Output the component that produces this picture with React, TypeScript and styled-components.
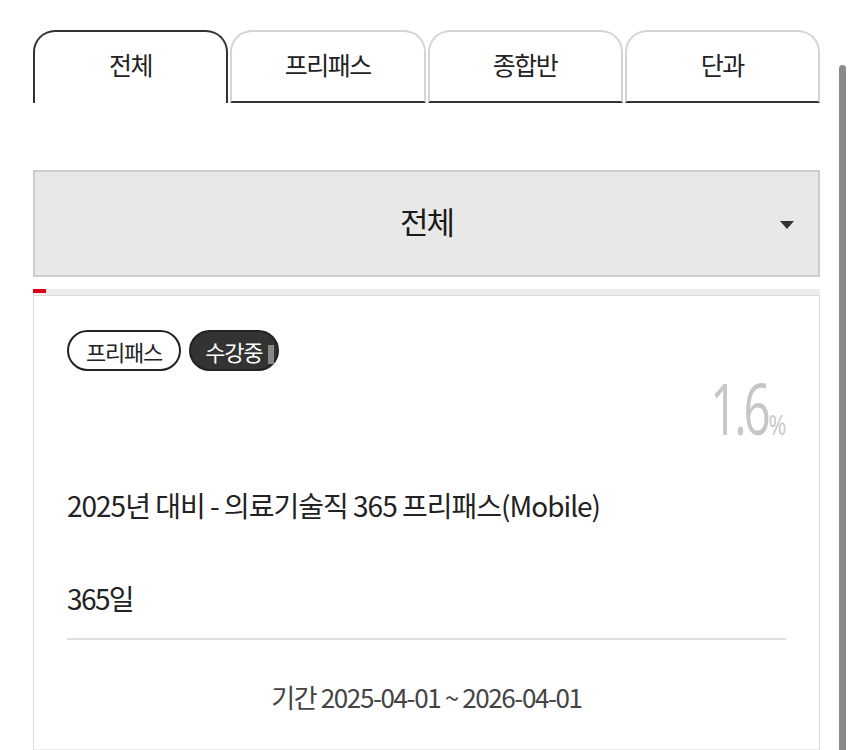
import { FC } from 'react';
import styled, { createGlobalStyle } from 'styled-components';

const GlobalStyle = createGlobalStyle`
    html, body {
        margin: 0;
        padding: 0;
        background: #fff;
        font-family: 'Noto Sans CJK KR', 'Noto Sans', sans-serif;
        color: #222;
    }
    * {
        box-sizing: border-box;
    }
`;

const Page = styled.div`
    position: relative;
    width: 854px;
    height: 750px;
    overflow: hidden;
    padding: 30px 34px 0 33px;
`;

const ScrollThumb = styled.div`
    position: absolute;
    right: 8px;
    top: 65px;
    width: 7px;
    height: 700px;
    border-radius: 4px 4px 0 0;
    background: #8a8a8a;
`;

const TabList = styled.div`
    display: grid;
    grid-template-columns: repeat(4, 1fr);
    gap: 2px;
    height: 73px;
`;

const Tab = styled.button<{ $active?: boolean }>`
    font-family: inherit;
    font-size: 25px;
    color: #222;
    background: #fff;
    border: 2px solid ${({ $active }) => ($active ? '#333' : '#d4d4d4')};
    border-bottom: ${({ $active }) => ($active ? 'none' : '2px solid #333')};
    border-radius: 22px 22px 0 0;
    padding: 0 0 ${({ $active }) => ($active ? '8px' : '6px')};
    letter-spacing: -1.5px;
    cursor: pointer;
`;

const SelectBox = styled.div`
    position: relative;
    margin-top: 67px;
    height: 107px;
    background: #e8e8e8;
    border: 2px solid #cdcdcd;
    display: flex;
    align-items: center;
    justify-content: center;
    padding-bottom: 6px;
    font-size: 31px;
    font-weight: 400;
    letter-spacing: -2px;
    color: #1a1a1a;
`;

const Caret = styled.span`
    position: absolute;
    right: 24px;
    top: 50%;
    margin-top: -3px;
    width: 0;
    height: 0;
    border-left: 7px solid transparent;
    border-right: 7px solid transparent;
    border-top: 8px solid #333;
`;

const Progress = styled.div`
    margin-top: 12px;
    height: 6px;
    background: #ececec;
`;

const ProgressFill = styled.div`
    height: 4px;
    background: #e0001b;
`;

const Card = styled.div`
    border: 1px solid #dcdcdc;
    border-bottom: 6px solid #ececec;
    padding: 34px 33px 0 33px;
    height: 460px;
`;

const BadgeRow = styled.div`
    display: flex;
    gap: 8px;
`;

const Badge = styled.span<{ $filled?: boolean }>`
    display: inline-flex;
    align-items: center;
    justify-content: center;
    height: 41px;
    padding: ${({ $filled }) => ($filled ? '0 3px 0 14px' : '0 17px')};
    border: 2px solid #222;
    border-radius: 21px;
    font-size: 22px;
    letter-spacing: -1.2px;
    background: ${({ $filled }) => ($filled ? '#333' : '#fff')};
    color: ${({ $filled }) => ($filled ? '#fff' : '#222')};
`;

const BadgeMark = styled.span`
    display: inline-block;
    width: 6px;
    height: 19px;
    margin-left: 6px;
    margin-top: 8px;
    background: #888;
`;

const Rate = styled.div`
    display: flex;
    justify-content: flex-end;
    align-items: baseline;
    color: #c6c6c6;
    font-family: 'Open Sans', 'Noto Sans', sans-serif;
    font-weight: 400;
    height: 72px;
    line-height: 72px;
`;

const RateValue = styled.span`
    display: inline-block;
    font-size: 72px;
    letter-spacing: -5px;
    transform: scaleX(0.66);
    transform-origin: right center;
    margin-right: -4px;
`;

const RateUnit = styled.span`
    font-size: 27px;
    display: inline-block;
    transform: scaleX(0.8);
    transform-origin: right center;
`;

const Title = styled.div`
    margin-top: 44px;
    font-size: 28px;
    letter-spacing: -1px;
    line-height: 36px;
    color: #222;
`;

const Days = styled.div`
    margin-top: 57px;
    font-size: 28px;
    letter-spacing: -1.6px;
    line-height: 36px;
    color: #222;
`;

const Divider = styled.hr`
    margin: 22px 0 0;
    border: none;
    border-top: 2px solid #dedede;
`;

const Period = styled.div`
    margin-top: 38px;
    text-align: center;
    font-size: 26px;
    letter-spacing: -1.4px;
    color: #444;
`;

const tabs = ['전체', '프리패스', '종합반', '단과'];

const App: FC = () => {
    const progress = 1.6;

    return (
        <Page>
            <GlobalStyle />
            <TabList>
                {tabs.map((t, i) => (
                    <Tab key={t} $active={i === 0}>
                        {t}
                    </Tab>
                ))}
            </TabList>
            <SelectBox>
                전체
                <Caret />
            </SelectBox>
            <Progress>
                <ProgressFill style={{ width: `${progress}%` }} />
            </Progress>
            <Card>
                <BadgeRow>
                    <Badge>프리패스</Badge>
                    <Badge $filled>
                        수강중
                        <BadgeMark />
                    </Badge>
                </BadgeRow>
                <Rate>
                    <RateValue>{progress}</RateValue>
                    <RateUnit>%</RateUnit>
                </Rate>
                <Title>2025년 대비 - 의료기술직 365 프리패스(Mobile)</Title>
                <Days>365일</Days>
                <Divider />
                <Period>기간 2025-04-01 ~ 2026-04-01</Period>
            </Card>
            <ScrollThumb />
        </Page>
    );
};

export default App;
